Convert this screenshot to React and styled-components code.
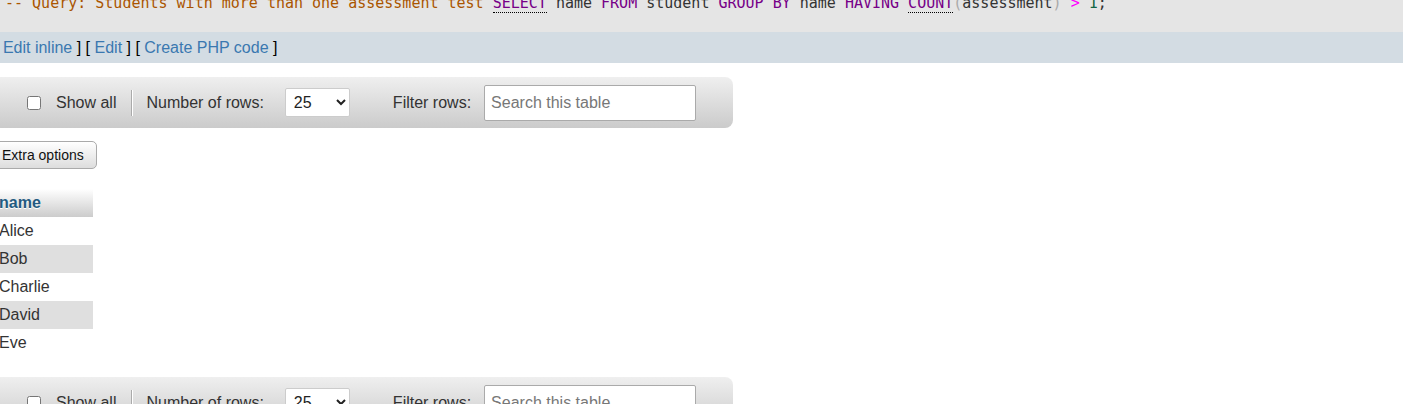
import React from "react";
import styled, { createGlobalStyle } from "styled-components";

const GlobalStyle = createGlobalStyle`
  html, body {
    margin: 0;
    padding: 0;
    overflow: hidden;
    background: #fff;
  }
  body {
    font-family: "Liberation Sans", Arial, sans-serif;
    font-size: 16px;
    color: #333;
  }
`;

// the screenshot is scrolled a little to the right and down
const Page = styled.main`
  margin: -14px 0 0 -10px;
`;

const SqlBox = styled.pre`
  margin: 0;
  padding: 8px 0 20px 15px;
  background: #e5e5e5;
  font-family: "DejaVu Sans Mono", "Liberation Mono", monospace;
  font-size: 15px;
  line-height: 18px;
  color: #333;
  white-space: pre;
`;

const Tok = styled.span`
  color: ${(p) => p.$c || "#333"};
  ${(p) => p.$dotted && "border-bottom: 1px dotted #000;"}
`;

const LinksBar = styled.div`
  background: #d3dce3;
  padding: 6px 0 6px 4px;
  line-height: 19px;
  color: #000;
`;

const BarLink = styled.a`
  color: #3a78b0;
  text-decoration: none;
`;

const Toolbar = styled.div`
  display: flex;
  align-items: center;
  width: max-content;
  height: 51px;
  margin-top: ${(p) => p.$top || 0}px;
  padding: 0 37px;
  background: linear-gradient(#efefef, #cbcbcb);
  border-radius: 0 8px 8px 0;
`;

const CheckLabel = styled.label`
  display: flex;
  align-items: center;
  gap: 15px;
  color: #333;
  input {
    margin: 0;
    width: 14px;
    height: 14px;
  }
`;

const Separator = styled.span`
  display: inline-block;
  width: 1px;
  height: 26px;
  margin: 0 14px 0 15px;
  background: #aaa;
  box-shadow: 1px 0 0 #fff;
`;

const FieldLabel = styled.span`
  color: #333;
  margin-left: ${(p) => p.$left || 0}px;
`;

const RowsSelect = styled.select`
  margin-left: 21px;
  width: 65px;
  height: 29px;
  padding: 0 4px;
  border: 1px solid #ccc;
  border-radius: 2px;
  background: #fff;
  font-family: "Liberation Sans", Arial, sans-serif;
  font-size: 16px;
  color: #222;
`;

const SearchInput = styled.input`
  margin-left: 13px;
  width: 212px;
  height: 36px;
  box-sizing: border-box;
  padding: 0 6px;
  border: 1px solid #aaa;
  border-radius: 2px;
  background: #fff;
  font-family: "Liberation Sans", Arial, sans-serif;
  font-size: 16px;
  &::placeholder {
    color: #777;
  }
`;

const OptionsButton = styled.button`
  display: block;
  margin: 13px 0 0 1px;
  height: 28px;
  padding: 0 12px 0 10px;
  border: 1px solid #aaa;
  border-radius: 5px;
  background: linear-gradient(#fff, #ddd);
  font-family: "Liberation Sans", Arial, sans-serif;
  font-size: 14px;
  color: #111;
`;

const Results = styled.table`
  margin: 20px 0 0 5px;
  border-collapse: collapse;
`;

const HeadCell = styled.th`
  width: 89px;
  padding: 5px 5px 5px 4px;
  line-height: 18px;
  text-align: left;
  font-weight: bold;
  color: #235a81;
  text-shadow: 0 1px 0 #fff;
  background: linear-gradient(#fff, #ccc);
`;

const Row = styled.tr`
  background: ${(p) => (p.$odd ? "#dfdfdf" : "#fff")};
`;

const Cell = styled.td`
  padding: 5px 5px 5px 4px;
  line-height: 18px;
  color: #333;
`;

const names = ["Alice", "Bob", "Charlie", "David", "Eve"];

const TableNav = ({ top }) => (
  <Toolbar $top={top}>
    <CheckLabel>
      <input type="checkbox" />
      Show all
    </CheckLabel>
    <Separator />
    <FieldLabel>Number of rows:</FieldLabel>
    <RowsSelect defaultValue="25">
      <option>25</option>
      <option>50</option>
      <option>100</option>
    </RowsSelect>
    <FieldLabel $left={43}>Filter rows:</FieldLabel>
    <SearchInput placeholder="Search this table" />
  </Toolbar>
);

const App = () => {
  return (
    <Page>
      <GlobalStyle />
      <SqlBox>
        <Tok $c="#aa5500">-- Query: Students with more than one assessment test </Tok>
        <Tok $c="#770088" $dotted>SELECT</Tok>
        <Tok> name </Tok>
        <Tok $c="#770088">FROM</Tok>
        <Tok> student </Tok>
        <Tok $c="#770088">GROUP BY</Tok>
        <Tok> name </Tok>
        <Tok $c="#770088">HAVING</Tok>
        <Tok> </Tok>
        <Tok $c="#770088" $dotted>COUNT</Tok>
        <Tok $c="#aaa">(</Tok>
        <Tok>assessment</Tok>
        <Tok $c="#aaa">)</Tok>
        <Tok> </Tok>
        <Tok $c="#ff00ff">&gt;</Tok>
        <Tok> </Tok>
        <Tok $c="#116644">1</Tok>
        <Tok>;</Tok>
      </SqlBox>
      <LinksBar>
        [ <BarLink href="#">Edit inline</BarLink> ] [ <BarLink href="#">Edit</BarLink> ] [{" "}
        <BarLink href="#">Create PHP code</BarLink> ]
      </LinksBar>
      <TableNav top={14} />
      <OptionsButton>Extra options</OptionsButton>
      <Results>
        <thead>
          <tr>
            <HeadCell>name</HeadCell>
          </tr>
        </thead>
        <tbody>
          {names.map((n, i) => (
            <Row key={n} $odd={i % 2 === 1}>
              <Cell>{n}</Cell>
            </Row>
          ))}
        </tbody>
      </Results>
      <TableNav top={20} />
    </Page>
  );
};

export default App;
